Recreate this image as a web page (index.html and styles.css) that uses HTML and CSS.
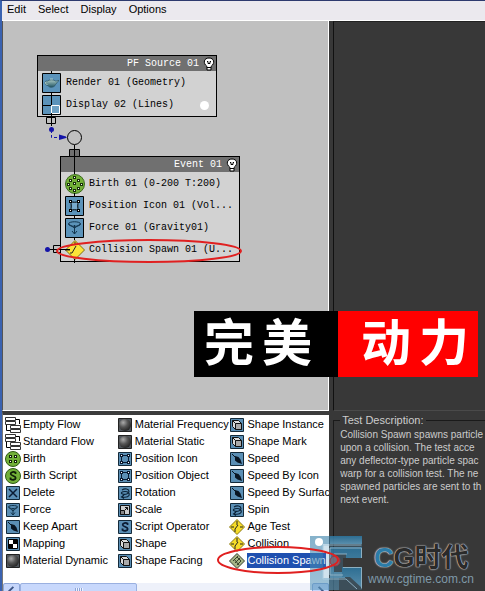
FILE: index.html
```html
<!DOCTYPE html>
<html lang="en">
<head>
<meta charset="utf-8">
<title>Particle View</title>
<link rel="stylesheet" href="styles.css">
</head>
<body>
<svg class="defs" aria-hidden="true">
  <defs>
    <radialGradient id="ball" cx="35%" cy="30%" r="75%"><stop offset="0" stop-color="#aaa"/><stop offset=".5" stop-color="#555"/><stop offset="1" stop-color="#222"/></radialGradient>
    <linearGradient id="pot" x1="0" y1="0" x2="0" y2="1"><stop offset="0" stop-color="#a9c9c4"/><stop offset="1" stop-color="#1f5361"/></linearGradient>
    <linearGradient id="badge" x1="0" y1="0" x2="0" y2="1"><stop offset="0" stop-color="#2b77a2"/><stop offset="1" stop-color="#5f9dc0"/></linearGradient>
  </defs>
  <symbol id="flow" viewBox="0 0 16 16"><path d="M11 2.500h3.500V7M1.500 8v5.500H5" fill="none" stroke="#000"/><path d="M.5.5h10v3H.5zM.5 4.500h10v3H.5zM5.500 8.500h10v3h-10zM5.500 12.500h10v3h-10z" fill="#fff" stroke="#333"/></symbol>
  <symbol id="birth" viewBox="0 0 16 16"><circle cx="8" cy="8" r="7.500" fill="#72b038" stroke="#2e5a14"/><path d="M4 4h3v3H4zM9 4h3v3H9zM4 9h3v3H4zM9 9h3v3H9z" fill="#142808"/><path d="M5 5h1v1H5zM10 5h1v1h-1zM5 10h1v1H5zM10 10h1v1h-1z" fill="#fff"/></symbol>
  <symbol id="bscript" viewBox="0 0 16 16"><circle cx="8" cy="8" r="7.500" fill="#72b038" stroke="#2e5a14"/><path d="M10.500 6V4.500C9 3.500 5.500 4 5.700 6c.2 2 5 1.500 5 4 0 2-3.700 2.300-5.200 1V9.500" fill="none" stroke="#102008" stroke-width="1.800"/></symbol>
  <symbol id="tile" viewBox="0 0 16 16"><path d="M1.500 1.500h13v13h-13z" fill="#5b8fb5" stroke="#142a3a"/></symbol>
  <symbol id="delete" viewBox="0 0 16 16"><use href="#tile"/><path d="M4 4l8 8M12 4l-8 8" stroke="#0b1c33" stroke-width="1.500"/></symbol>
  <symbol id="force" viewBox="0 0 16 16"><use href="#tile"/><path d="M3.500 5c0-2 9-2 9 0s-9 2-9 0l4.500 4 4.500-4M8 6v7M6 10.500l2 2.500 2-2.500" fill="none" stroke="#12344d"/></symbol>
  <symbol id="arrow" viewBox="0 0 16 16"><use href="#tile"/><path d="M6 5l3.500 1 2 2.500L13 13l-4.500-1.500-2.500-2z" fill="#091522"/><path d="M3 3l5 5" stroke="#091522"/></symbol>
  <symbol id="mapping" viewBox="0 0 16 16"><use href="#tile"/><path d="M3.500 3.500h9v9h-9z" fill="#fff" stroke="#000"/><path d="M8 4h4v4H8zM4 8h4v4H4z"/></symbol>
  <symbol id="material" viewBox="0 0 16 16"><path d="M1.500 1.500h13v13h-13z" fill="#50565c" stroke="#222"/><circle cx="8" cy="8" r="6" fill="url(#ball)"/></symbol>
  <symbol id="position" viewBox="0 0 16 16"><use href="#tile"/><path d="M5 4.500h6M5 11.500h6M4.500 5v6M11.500 5v6" stroke="#0b1c33"/><path d="M3 3h3v3H3zM10 3h3v3h-3zM3 10h3v3H3zM10 10h3v3h-3z" fill="#0b1c33"/><path d="M4 4h1v1H4zM11 4h1v1h-1zM4 11h1v1H4zM11 11h1v1h-1z" fill="#fff"/></symbol>
  <symbol id="rotate" viewBox="0 0 16 16"><use href="#tile"/><path d="M5 5c3-2 7-1 7 1.500S8 10 5.500 9 5 6.500 8 6.500s5 2 4 4-4 2-7 1.500M7 10l-2.500 2L7 13.500" fill="none" stroke="#0b2338" stroke-width="1.100"/></symbol>
  <symbol id="scale" viewBox="0 0 16 16"><use href="#tile"/><path d="M3.500 3.500h9v9h-9z" fill="#ccc" stroke="#111"/><path d="M3.500 8.500h4v4h-4z" fill="#888" stroke="#111"/><path d="M8 8l2.500-2.500M8 5.500h2.500V8" fill="none" stroke="#111"/></symbol>
  <symbol id="script" viewBox="0 0 16 16"><use href="#tile"/><path d="M10.500 6V4.500C9 3.500 5.500 4 5.700 6c.2 2 5 1.500 5 4 0 2-3.700 2.300-5.200 1V9.500" fill="none" stroke="#0b1c33" stroke-width="1.800"/></symbol>
  <symbol id="shape" viewBox="0 0 16 16"><use href="#tile"/><path d="M3.500 3.500h6l3 3v6h-6l-3-3z" fill="#ddd" stroke="#111"/><path d="M6.500 6.500h6v6h-6zM3.500 3.500l3 3" fill="#aaa" stroke="#111"/></symbol>
  <symbol id="test" viewBox="0 0 16 16"><path d="M8 .5L15.500 8 8 15.500.5 8z" fill="#f6dc28" stroke="#8a7610"/><path d="M8 2v4M6 10l3-4M6 10v3M2 8h3M11 8h3" fill="none" stroke="#222"/></symbol>
  <symbol id="spawn" viewBox="0 0 16 16"><path d="M8 .5L15.500 8 8 15.500.5 8z" fill="#a6b586" stroke="#343c2c"/><path d="M4 8l5-5M6 10l5-5M8 12l4-4M5 6l5 6M8 4l4 4" stroke="#35422c"/></symbol>
  <symbol id="bulb" viewBox="0 0 12 14"><path d="M4 9.500C-.5 6 1 1 6 1s6.500 5 2 8.500V13H4z" fill="#fff" stroke="#000"/><path d="M4 10.500h4M4 4.500h1v2h2v-2h1" fill="none" stroke="#000"/></symbol>
</svg>

<nav class="menu">
  <button>Edit</button><button>Select</button><button>Display</button><button>Options</button>
</nav>

<main class="work">
  <section class="canvas" aria-label="Event display">
    <article class="node source">
      <h2>PF Source 01<svg class="bulb"><use href="#bulb"/></svg></h2>
      <ul>
        <li><svg class="op" viewBox="0 0 20 20"><path d="M.5.5h18v19H.5z" fill="#5b93ba" stroke="#000"/><path d="M5.500 8c1-1.500 7-1.500 8 0 1 .5 1.500-1 3.500-.5-1.500.5-2 3-3.500 4-1 3.500-6.500 3.500-7.500 1C2 12 2 7.500 5.500 8z" fill="url(#pot)" stroke="#2c5563" stroke-width=".7"/><path d="M8 6h3M3.500 9c-.5 1.500.5 2.500 2 2.500" stroke="#a9c9c4" fill="none"/></svg>Render 01 (Geometry)</li>
        <li><svg class="op" viewBox="0 0 20 20"><path d="M.5.500h18v19H.5zM9.500 0v20M0 10.500h19" fill="#5b93ba" stroke="#000"/><path d="M9.500 10.500h8v8h-8z" fill="#6fa2c4" stroke="#fff"/></svg>Display 02 (Lines)<span class="dot"></span></li>
      </ul>
    </article>
    <article class="node event">
      <h2>Event 01<svg class="bulb"><use href="#bulb"/></svg></h2>
      <ul>
        <li><svg class="op" viewBox="0 0 20 20"><circle cx="10" cy="10" r="9.500" fill="#72b038" stroke="#3a6a1c"/><path d="M8 2h3v3H8zM4 5h3v3H4zM12 5h3v3h-3zM8 8h3v3H8zM2 9h3v3H2zM15 9h3v3h-3zM4 13h3v3H4zM12 13h3v3h-3zM8 15h3v3H8z" fill="#18300a"/><path d="M9 3h1v1H9zM5 6h1v1H5zM13 6h1v1h-1zM9 9h1v1H9zM3 10h1v1H3zM16 10h1v1h-1zM5 14h1v1H5zM13 14h1v1h-1zM9 16h1v1H9z" fill="#fff"/></svg>Birth 01 (0-200 T:200)</li>
        <li><svg class="op" viewBox="0 0 20 20"><path d="M.5.5h18v19H.5z" fill="#5b93ba" stroke="#000"/><path d="M5.500 5.500c2 1 6 1 8 0-1 2-1 7 0 9-2-1-6-1-8 0 1-2 1-7 0-9z" fill="#78aacd" stroke="#000"/><path d="M4 4h3v3H4zM12 4h3v3h-3zM4 13h3v3H4zM12 13h3v3h-3z"/><path d="M5 5h1v1H5zM13 5h1v1h-1zM5 14h1v1H5zM13 14h1v1h-1z" fill="#fff"/></svg>Position Icon 01 (Vol...</li>
        <li><svg class="op" viewBox="0 0 20 20"><path d="M.5.5h18v19H.5z" fill="#5b93ba" stroke="#000"/><path d="M3.500 6c0-3 12-3 12 0s-12 3-12 0l6 4 6-4M9.500 7v9M7 13l2.500 3 2.500-3" fill="none" stroke="#12344d"/></svg>Force 01 (Gravity01)</li>
        <li><svg class="op" viewBox="0 0 20 20"><path d="M10 .5l9.500 9.500-9.500 9.500L.5 10z" fill="#fbe437" stroke="#806d10"/><path d="M0 10h5M10 2v3M7 13l4-7M7 13h-2" stroke="#222" fill="none"/></svg>Collision Spawn 01 (U...</li>
      </ul>
    </article>
    <svg class="wires" aria-hidden="true">
      <g fill="none" stroke="#000">
        <path d="M49.500 50v2M49.500 72v2M44.500 96.500h9v6h-9zM49.500 92v13"/>
        <circle cx="72.500" cy="116.500" r="7"/>
        <path d="M67.500 128.500h10v7h-10z" fill="#707070"/>
        <path d="M72.500 124v29M72.500 172v3M72.500 194v3M72.500 216v3M72.500 238v4"/>
        <path d="M51.500 224.500h7v7h-7zM46 228.500h22"/>
      </g>
      <g fill="#1414a8"><circle cx="49.500" cy="108.500" r="2.500"/><circle cx="45.500" cy="228.500" r="2.500"/><path d="M57 113.500l7 2v1.500l-7 2z"/></g>
      <path d="M49.500 109v7.500h15" fill="none" stroke="#1414a8" stroke-dasharray="3 2"/>
      <ellipse cx="147" cy="230" rx="92" ry="11" fill="none" stroke="#e02020" stroke-width="2"/>
    </svg>
  </section>

  <section class="params" aria-label="Parameters"></section>

  <section class="depot" aria-label="Depot">
    <div class="columns">
      <ul>
        <li><svg><use href="#flow"/></svg>Empty Flow</li>
        <li><svg><use href="#flow"/></svg>Standard Flow</li>
        <li><svg><use href="#birth"/></svg>Birth</li>
        <li><svg><use href="#bscript"/></svg>Birth Script</li>
        <li><svg><use href="#delete"/></svg>Delete</li>
        <li><svg><use href="#force"/></svg>Force</li>
        <li><svg><use href="#arrow"/></svg>Keep Apart</li>
        <li><svg><use href="#mapping"/></svg>Mapping</li>
        <li><svg><use href="#material"/></svg>Material Dynamic</li>
      </ul>
      <ul>
        <li><svg><use href="#material"/></svg>Material Frequency</li>
        <li><svg><use href="#material"/></svg>Material Static</li>
        <li><svg><use href="#position"/></svg>Position Icon</li>
        <li><svg><use href="#position"/></svg>Position Object</li>
        <li><svg><use href="#rotate"/></svg>Rotation</li>
        <li><svg><use href="#scale"/></svg>Scale</li>
        <li><svg><use href="#script"/></svg>Script Operator</li>
        <li><svg><use href="#shape"/></svg>Shape</li>
        <li><svg><use href="#shape"/></svg>Shape Facing</li>
      </ul>
      <ul>
        <li><svg><use href="#shape"/></svg>Shape Instance</li>
        <li><svg><use href="#shape"/></svg>Shape Mark</li>
        <li><svg><use href="#arrow"/></svg>Speed</li>
        <li><svg><use href="#arrow"/></svg>Speed By Icon</li>
        <li><svg><use href="#arrow"/></svg>Speed By Surfac</li>
        <li><svg><use href="#rotate"/></svg>Spin</li>
        <li><svg><use href="#test"/></svg>Age Test</li>
        <li><svg><use href="#test"/></svg>Collision</li>
        <li><svg><use href="#spawn"/></svg><span class="selected">Collision Spawn</span></li>
      </ul>
    </div>
    <div class="scroll">
      <button aria-label="Scroll left"><svg viewBox="0 0 16 16"><path d="M10 3L5 8l5 5" fill="none" stroke="#3c5484" stroke-width="2"/></svg></button>
      <div class="thumb"><i></i></div>
      <button aria-label="Scroll right"><svg viewBox="0 0 16 16"><path d="M6 3l5 5-5 5" fill="none" stroke="#3c5484" stroke-width="2"/></svg></button>
    </div>
  </section>

  <section class="info">
    <fieldset>
      <legend>Test Description:</legend>
      <p>Collision Spawn spawns particle<br>upon a collision. The test acce<br>any deflector-type particle spac<br>warp for a collision test. The ne<br>spawned particles are sent to th<br>next event.</p>
    </fieldset>
  </section>
</main>

<div class="banner"><div><span>完</span><span>美</span></div><div><span>动</span><span>力</span></div></div>
<div class="logo">
  <svg viewBox="0 0 52 54" aria-hidden="true">
    <path d="M0 0h52v22H33v9h19v23H0z" fill="#4a8fb8" opacity=".3"/>
    <path d="M0 0h52v8H13v34h16v12H0z" fill="url(#badge)" opacity=".55"/>
    <path d="M20 0h32v8H20z" fill="url(#badge)"/>
    <path d="M20 11h32v11H36v-4H24v18h11v6H20z" fill="url(#badge)"/>
    <path d="M32 31h20v21L40 41h-8z" fill="url(#badge)"/>
    <path d="M13 9h38.500M13 9v5M13 34v9h23l11 10M20 12h31.500v10M20 12v27h13M24 18h13M33 31.500h18.500v21" fill="none" stroke="#9cc4da"/>
    <circle cx="25" cy="25" r="5" fill="#7d7689" stroke="#b03944"/>
    <circle cx="9" cy="6" r="4" fill="#fff"/>
  </svg>
  <div class="brand"><strong><b>C</b>G时代</strong><small>www.cgtime.com.cn</small></div>
</div>
<svg class="ring" viewBox="0 0 124 32" aria-hidden="true"><ellipse cx="62" cy="16" rx="60" ry="13" fill="none" stroke="#e02020" stroke-width="2"/></svg>
</body>
</html>
```
FILE: styles.css
```css
* { box-sizing: border-box; }
body {
  margin: 0;
  height: 100vh;
  overflow: hidden;
  position: relative;
  display: flex;
  flex-direction: column;
  border-left: 2px solid #3a62b0;
  border-top: 1px solid #2d3a6e;
  background: #383838;
  font: 11px/17px "Liberation Sans", "Noto Sans CJK SC", sans-serif;
  color: #000;
}
ul, h2, p { margin: 0; padding: 0; list-style: none; font-size: inherit; font-weight: normal; }
button { border: 0; padding: 0; background: none; font: inherit; color: inherit; }
.defs { position: absolute; width: 0; height: 0; }

.menu {
  display: flex;
  gap: 12px;
  height: 20px;
  flex: none;
  padding: 0 5px 2px;
  background: #ebe9ee;
  border-bottom: 1px solid #fff;
}

.work {
  flex: 1;
  min-height: 0;
  display: grid;
  grid-template-columns: 21fr 10fr;
  grid-template-rows: 1fr auto;
}
.work > * { min-width: 0; }

.canvas {
  position: relative;
  overflow: hidden;
  background: #c0c0c0;
  border-left: 1px solid #555;
  border-right: 1px solid #fff;
  border-bottom: 1px solid #fff;
}
.node {
  position: absolute;
  width: 180px;
  border: 1px solid #000;
  background: #d2d2d2;
  font: 10px/22px "Liberation Mono", monospace;
}
.source { left: 34px; top: 34px; }
.event { left: 57px; top: 135px; }
.node h2 {
  display: flex;
  justify-content: flex-end;
  align-items: center;
  gap: 4px;
  height: 15px;
  padding-right: 1px;
  background: #707070;
  color: #fff;
}
.node ul { padding-top: 1px; }
.node li { display: flex; align-items: center; gap: 4px; height: 22px; padding-left: 4px; white-space: nowrap; }
.bulb { width: 12px; height: 14px; }
.op { width: 20px; height: 20px; flex: none; }
.dot { width: 9px; height: 9px; margin: 0 7px 0 auto; border-radius: 50%; background: #fff; }
.wires { position: absolute; left: -1px; top: 0; width: 100%; height: 100%; }

.params { margin-left: 4px; border-left: 1px solid #111; border-top: 1px solid #222; border-bottom: 1px solid #4a4a4a; }

.depot { background: #fff; border-top: 4px solid #3c3c3c; border-left: 1px solid #777; overflow: hidden; }
.columns { display: grid; grid-template-columns: 112fr 113fr 100fr; padding: 1px 0 14px 2px; }
.columns ul { min-width: 0; }
.columns li { display: flex; align-items: center; gap: 2px; height: 17px; white-space: nowrap; }
.columns svg { width: 16px; height: 16px; flex: none; }
.selected { background: #1f50b0; color: #fff; line-height: 15px; }

.scroll { display: flex; height: 8px; overflow: hidden; background: #eef1fa; }
.scroll button { width: 17px; height: 17px; background: #c6d6fb; border: 1px solid #8da6d8; border-radius: 2px; }
.scroll svg { display: block; width: 15px; height: 15px; }
.thumb { flex: none; width: 36%; height: 17px; margin-right: auto; display: flex; justify-content: center; background: #c8d8fc; border: 1px solid #9ab0e0; border-radius: 2px; }
.thumb i { width: 8px; height: 7px; margin-top: 4px; background: repeating-linear-gradient(90deg, #8ca4d8 0 1px, #eef4ff 1px 2px); }

.info { padding: 3px 0 0 4px; overflow: hidden; color: #ccc; }
.info fieldset { margin: 0; padding: 1px 0 0 6px; height: 100%; min-width: 0; border: 1px solid #1a1a1a; border-width: 1px 0 0 1px; }
.info legend { padding: 0 2px; line-height: 13px; }
.info p { font-size: 10px; line-height: 13px; white-space: nowrap; }

.banner { position: absolute; left: 192px; top: 310px; display: flex; font: bold 50px/56px "Noto Sans CJK SC", sans-serif; color: #fff; }
.banner div { display: flex; gap: 8px; height: 66px; padding: 0 26px 0 10px; background: #000; }
.banner div + div { padding: 0 9px 0 23px; background: #f00; }

.ring { position: absolute; left: 214px; top: 543px; width: 124px; height: 32px; }
.logo { position: absolute; left: 308px; top: 535px; display: flex; gap: 6px; }
.logo > svg { width: 52px; height: 54px; opacity: .85; }
.brand { display: flex; flex-direction: column; padding-top: 8px; }
.brand strong { padding-left: 6px; font: bold 27px/28px "Liberation Sans", "Noto Sans CJK SC", sans-serif; color: #2a2a2a; text-shadow: 0 0 1px #ccc, 0 0 1px #ccc, 0 0 2px #ccc; white-space: nowrap; }
.brand b { color: #2c7ca8; }
.brand small { font-size: 12px; line-height: 14px; color: #7f99a8; }
```
